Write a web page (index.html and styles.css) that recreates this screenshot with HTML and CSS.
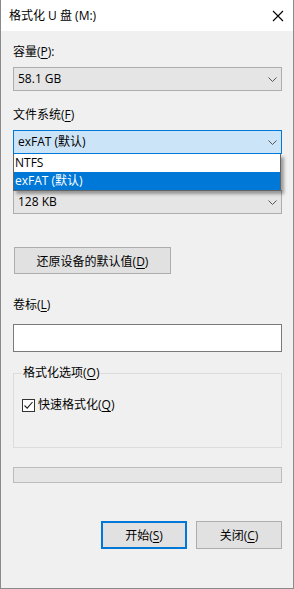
FILE: index.html
```html
<!DOCTYPE html>
<html>
<head>
    <title>格式化 U 盘 (M:)</title>
    <link rel="stylesheet" href="styles.css">
</head>
<body>
    <div class="window">
        <div class="titlebar">
            <span class="title">格式化 U 盘 (M:)</span>
            <svg class="close" width="12" height="12" viewBox="0 0 12 12">
                <path d="M1 1 L11 11 M11 1 L1 11" stroke="#000" stroke-width="1.1" fill="none"/>
            </svg>
        </div>
        <div class="content">
            <div class="label label-first">容量(<u>P</u>):</div>
            <div class="combo">
                <span>58.1 GB</span>
                <svg class="chevron" width="9" height="5" viewBox="0 0 9 5"><path d="M0.5 0.5 L4.5 4.5 L8.5 0.5" stroke="#555" fill="none"/></svg>
            </div>

            <div class="label">文件系统(<u>F</u>)</div>
            <div class="combo-wrap">
                <div class="combo combo-focus">
                    <span>exFAT (默认)</span>
                    <svg class="chevron" width="9" height="5" viewBox="0 0 9 5"><path d="M0.5 0.5 L4.5 4.5 L8.5 0.5" stroke="#555" fill="none"/></svg>
                </div>
                <div class="dropdown">
                    <div class="option">NTFS</div>
                    <div class="option selected">exFAT (默认)</div>
                </div>
            </div>

            <!-- allocation label sits under the open list -->
            <div class="label label-alloc"></div>
            <div class="combo">
                <span>128 KB</span>
                <svg class="chevron" width="9" height="5" viewBox="0 0 9 5"><path d="M0.5 0.5 L4.5 4.5 L8.5 0.5" stroke="#555" fill="none"/></svg>
            </div>

            <button class="btn btn-restore">还原设备的默认值(<u>D</u>)</button>

            <div class="label label-volume">卷标(<u>L</u>)</div>
            <div class="textbox"></div>

            <fieldset class="group">
                <legend>格式化选项(<u>O</u>)</legend>
                <div class="check-row">
                    <span class="checkbox">
                        <svg width="11" height="11" viewBox="0 0 11 11"><path d="M1.5 5.5 L4.2 8.2 L9.5 2" stroke="#222" stroke-width="1.1" fill="none"/></svg>
                    </span>
                    <span>快速格式化(<u>Q</u>)</span>
                </div>
            </fieldset>

            <div class="progress"></div>

            <div class="actions">
                <button class="btn btn-action btn-default">开始(<u>S</u>)</button>
                <button class="btn btn-action">关闭(<u>C</u>)</button>
            </div>
        </div>
    </div>
</body>
</html>
```
FILE: styles.css
```css
html, body {
    margin: 0;
    padding: 0;
}

body {
    font-family: "Open Sans", "Noto Sans CJK SC", sans-serif;
    font-size: 12px;
    line-height: 16px;
    color: #000;
    background: #f0f0f0;
}

u {
    text-decoration-thickness: 1px;
    text-underline-offset: 2px;
}

.window {
    width: 294px;
    height: 589px;
    box-sizing: border-box;
    border: 1px solid #8a8a8a;
    border-top: none;
    display: flex;
    flex-direction: column;
}

.titlebar {
    height: 31px;
    background: #fff;
    display: flex;
    align-items: center;
    padding-left: 8px;
    padding-right: 9px;
}

.title {
    flex: 1;
}

.close {
    margin-top: 1px;
}

.content {
    flex: 1;
    background: #f0f0f0;
    padding: 0 11px 0 12px;
    display: flex;
    flex-direction: column;
}

.label {
    height: 16px;
    margin-top: 16px;
    margin-bottom: 7px;
}

.label-first {
    margin-top: 13px;
    margin-bottom: 7px;
}

.label-alloc {
    margin-top: 12px;
    margin-bottom: 8px;
}

.label-volume {
    margin-top: 23px;
    margin-bottom: 11px;
}

.combo {
    height: 24px;
    box-sizing: border-box;
    border: 1px solid #adadad;
    background: #e5e5e5;
    display: flex;
    align-items: center;
    padding: 0 4px 0 4px;
}

.combo span {
    flex: 1;
}

.combo-focus {
    border-color: #0078d7;
    background: #cce4f7;
}

.combo-wrap {
    position: relative;
}

.dropdown {
    position: absolute;
    top: 24px;
    left: 0;
    right: 1px;
    z-index: 2;
    background: #fff;
    border: 1px solid #646464;
    border-top: none;
    box-shadow: 3px 3px 3px rgba(0, 0, 0, 0.35);
}

.option {
    height: 18px;
    line-height: 18px;
    padding-left: 1px;
}

.option.selected {
    background: #0078d7;
    color: #fff;
}

.btn {
    font-family: inherit;
    font-size: 12px;
    color: #000;
    background: #e1e1e1;
    border: 1px solid #adadad;
    padding: 0;
    margin: 0;
    box-sizing: border-box;
}

.btn-restore {
    width: 157px;
    height: 27px;
    margin-top: 33px;
    margin-left: 1px;
    align-self: flex-start;
}

.textbox {
    height: 28px;
    box-sizing: border-box;
    border: 1px solid #7a7a7a;
    background: #fff;
}

.group {
    margin: 13px 0 0 0;
    padding: 0 8px 0 8px;
    height: 83px;
    box-sizing: border-box;
    border: 1px solid #dcdcdc;
    min-width: 0;
}

.group legend {
    padding: 0 1px;
    margin-left: 0;
}

.check-row {
    display: flex;
    align-items: center;
    margin-top: 16px;
}

.checkbox {
    width: 13px;
    height: 13px;
    box-sizing: border-box;
    border: 1px solid #333;
    background: #fff;
    display: flex;
    align-items: center;
    justify-content: center;
    margin-right: 3px;
}

.progress {
    height: 16px;
    margin-top: 19px;
    box-sizing: border-box;
    border: 1px solid #bcbcbc;
    background: #e6e6e6;
}

.actions {
    display: flex;
    justify-content: flex-end;
    gap: 9px;
    margin-top: 38px;
}

.btn-action {
    width: 86px;
    height: 28px;
}

.btn-default {
    border: 2px solid #0078d7;
}
```
